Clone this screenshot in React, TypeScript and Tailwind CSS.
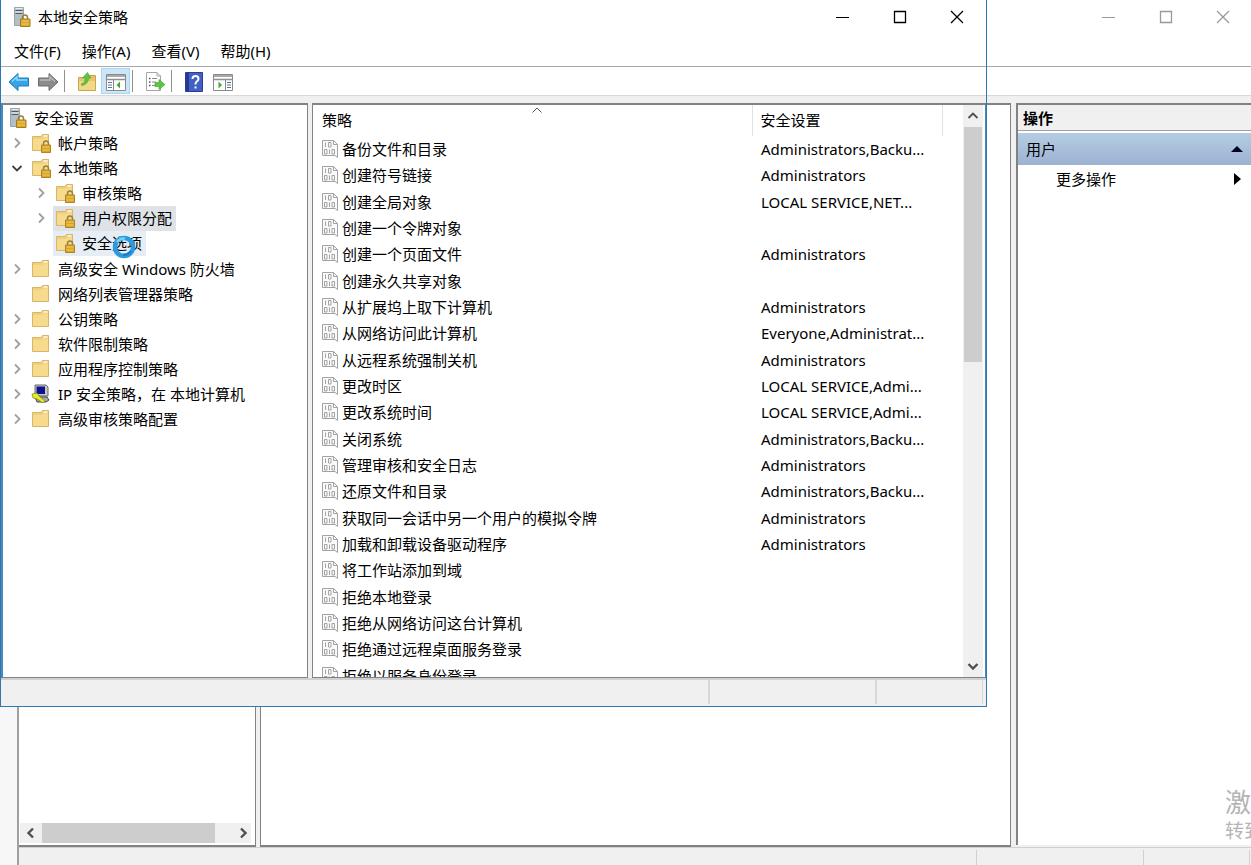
import type { ReactNode } from 'react';

interface TreeNode {
  label: string;
  level: number;
  icon: 'server' | 'locked' | 'folder' | 'ipsec';
  arrow?: 'closed' | 'open';
  state?: 'selected' | 'hover';
}

interface Policy {
  name: string;
  setting?: string;
}

const tree: TreeNode[] = [
  { label: '安全设置', level: 0, icon: 'server' },
  { label: '帐户策略', level: 1, icon: 'locked', arrow: 'closed' },
  { label: '本地策略', level: 1, icon: 'locked', arrow: 'open' },
  { label: '审核策略', level: 2, icon: 'locked', arrow: 'closed' },
  { label: '用户权限分配', level: 2, icon: 'locked', arrow: 'closed', state: 'selected' },
  { label: '安全选项', level: 2, icon: 'locked', state: 'hover' },
  { label: '高级安全 Windows 防火墙', level: 1, icon: 'folder', arrow: 'closed' },
  { label: '网络列表管理器策略', level: 1, icon: 'folder' },
  { label: '公钥策略', level: 1, icon: 'folder', arrow: 'closed' },
  { label: '软件限制策略', level: 1, icon: 'folder', arrow: 'closed' },
  { label: '应用程序控制策略', level: 1, icon: 'folder', arrow: 'closed' },
  { label: 'IP 安全策略，在 本地计算机', level: 1, icon: 'ipsec', arrow: 'closed' },
  { label: '高级审核策略配置', level: 1, icon: 'folder', arrow: 'closed' },
];

const policies: Policy[] = [
  { name: '备份文件和目录', setting: 'Administrators,Backu...' },
  { name: '创建符号链接', setting: 'Administrators' },
  { name: '创建全局对象', setting: 'LOCAL SERVICE,NET...' },
  { name: '创建一个令牌对象' },
  { name: '创建一个页面文件', setting: 'Administrators' },
  { name: '创建永久共享对象' },
  { name: '从扩展坞上取下计算机', setting: 'Administrators' },
  { name: '从网络访问此计算机', setting: 'Everyone,Administrat...' },
  { name: '从远程系统强制关机', setting: 'Administrators' },
  { name: '更改时区', setting: 'LOCAL SERVICE,Admi...' },
  { name: '更改系统时间', setting: 'LOCAL SERVICE,Admi...' },
  { name: '关闭系统', setting: 'Administrators,Backu...' },
  { name: '管理审核和安全日志', setting: 'Administrators' },
  { name: '还原文件和目录', setting: 'Administrators,Backu...' },
  { name: '获取同一会话中另一个用户的模拟令牌', setting: 'Administrators' },
  { name: '加载和卸载设备驱动程序', setting: 'Administrators' },
  { name: '将工作站添加到域' },
  { name: '拒绝本地登录' },
  { name: '拒绝从网络访问这台计算机' },
  { name: '拒绝通过远程桌面服务登录' },
  { name: '拒绝以服务身份登录' },
];

const menus = ['文件(F)', '操作(A)', '查看(V)', '帮助(H)'];

export default function App() {
  return (
    <div className="relative min-h-screen overflow-hidden bg-[#f7f7f7] pl-[17px] font-['Noto_Sans','Noto_Sans_CJK_SC',sans-serif] text-[15px] leading-5 text-black">
      <ConsoleWindow />
      <PolicyWindow />
    </div>
  );
}

// 后面的管理控制台窗口
function ConsoleWindow() {
  return (
    <div className="flex h-screen flex-col border-l-2 border-[#a0a0a0] bg-[#f0f0f0]">
      <div className="flex h-[66px] shrink-0 items-start justify-end bg-white text-[#999]">
        <CaptionButtons />
      </div>
      <div className="h-[30px] shrink-0 border-y border-t-[#a8a8a8] border-b-[#d8d8d8] bg-white" />
      <div className="flex min-h-0 flex-1 pt-[7px]">
        <div className="flex w-[237px] flex-col justify-end border-t-2 border-r border-b-2 border-[#828282] bg-white pr-1 pb-0.5 pl-px">
          <div className="flex h-5 items-center bg-[#f0f0f0]">
            <button aria-label="向左滚动" className="flex w-[22px] justify-center">
              <Chevron className="rotate-180 text-[#505050]" bold />
            </button>
            <div className="h-5 w-[173px] bg-[#cdcdcd]" />
            <button aria-label="向右滚动" className="ml-auto flex w-4 justify-center">
              <Chevron className="text-[#505050]" bold />
            </button>
          </div>
        </div>
        <div className="ml-1 flex-1 border border-t-2 border-b-2 border-[#828282] bg-white" />
        <div className="mb-0.5 ml-[5px] flex w-[235px] flex-col border-t-2 border-l-2 border-[#828282] bg-white">
          <div className="h-[26px] border-b border-[#a0a0a0] bg-[#f0f0f0] pt-[3px] pl-[5px] font-semibold">操作</div>
          <button className="mt-0.5 flex h-8 items-center justify-between bg-linear-to-b from-[#b4cde2] to-[#9db2d2] px-2">
            用户
            <svg className="h-1.5 w-3" viewBox="0 0 12 6">
              <path d="M6 0 12 6H0Z" fill="#000022" />
            </svg>
          </button>
          <button className="flex h-7 items-center justify-between pr-[10px] pl-[38px]">
            更多操作
            <svg className="h-3 w-[7px]" viewBox="0 0 7 12">
              <path d="M0 0 7 6 0 12Z" />
            </svg>
          </button>
          {/* 系统激活水印 */}
          <div className="mt-auto mb-0.5 ml-auto w-[26px] overflow-hidden whitespace-nowrap text-[#b4b4b4]">
            <p className="text-[26px] leading-[34px]">激活</p>
            <p className="text-[19px] leading-6">转到</p>
          </div>
        </div>
      </div>
      <div className="flex h-[18px] shrink-0 justify-end border-t border-[#d0d0d0] pt-0.5 pr-px">
        <div className="w-[167px] border-l border-[#d0d0d0]" />
        <div className="w-[107px] border-x border-[#d0d0d0]" />
      </div>
    </div>
  );
}

// 本地安全策略窗口
function PolicyWindow() {
  return (
    <div className="absolute top-0 right-[264px] bottom-[158px] left-0 flex flex-col border border-t-0 border-[#2a7ab0] bg-[#f0f0f0]">
      <div className="flex h-[34px] shrink-0 items-start justify-between bg-white pr-px pl-3">
        <div className="flex items-center gap-[7px] pt-[7px]">
          <ServerIcon />
          <h1>本地安全策略</h1>
        </div>
        <CaptionButtons />
      </div>
      <nav className="flex h-8 shrink-0 gap-[21px] bg-white pt-[7px] pl-[13px]">
        {menus.map((menu) => (
          <button key={menu} className="h-5">
            {menu}
          </button>
        ))}
      </nav>
      <Toolbar />
      <div className="flex min-h-0 flex-1 gap-1 pt-[7px]">
        <TreePane />
        <PolicyPane />
      </div>
      <div className="flex h-7 shrink-0 justify-end border-t-2 border-[#d0d0d0] pr-[3px] pb-0.5">
        <div className="w-[167px] border-l-2 border-[#d8d8d8]" />
        <div className="w-[108px] border-r border-l-2 border-[#d8d8d8]" />
      </div>
    </div>
  );
}

function CaptionButtons() {
  return (
    <div className="flex h-[34px]">
      <button aria-label="最小化" className="flex w-[57px] items-center justify-center">
        <svg className="size-[14px]" viewBox="0 0 14 14">
          <path d="M0 7.5H13" stroke="currentColor" />
        </svg>
      </button>
      <button aria-label="最大化" className="flex w-[57px] items-center justify-center">
        <svg className="size-[14px]" viewBox="0 0 14 14">
          <path d="M1.5 1.5H12.5V12.5H1.5Z" fill="none" stroke="currentColor" strokeWidth="1.3" />
        </svg>
      </button>
      <button aria-label="关闭" className="flex w-[57px] items-center justify-center">
        <svg className="size-[14px]" viewBox="0 0 14 14">
          <path d="M1 1 13 13M13 1 1 13" stroke="currentColor" strokeWidth="1.3" />
        </svg>
      </button>
    </div>
  );
}

function Toolbar() {
  return (
    <div className="flex h-[30px] shrink-0 items-center border-y border-t-[#a8a8a8] border-b-[#d8d8d8] bg-white pl-[3px]">
      <ToolButton label="后退">
        <svg className="h-5 w-[22px]" viewBox="0 0 22 20">
          <path d="M1 10 10 1.500V6H20.500V14H10V18.500Z" fill="#35a5e5" stroke="#1f7db8" />
          <path d="M4 9.500 9 5V8H19" fill="none" stroke="#8fd6fa" strokeWidth="1.500" />
        </svg>
      </ToolButton>
      <ToolButton label="前进">
        <svg className="h-5 w-[22px]" viewBox="0 0 22 20">
          <path d="M21 10 12 1.500V6H1.500V14H12V18.500Z" fill="#8c8c8c" stroke="#6c6c6c" />
          <path d="M3 8H13V5L18 9.500" fill="none" stroke="#b8b8b8" strokeWidth="1.500" />
        </svg>
      </ToolButton>
      <Separator />
      <ToolButton label="上移一级">
        <svg className="h-5 w-5" viewBox="0 0 20 20">
          <path d="M1.500 5.500H9L11 3.500H18.500V18.500H1.500Z" fill="#e6c56c" stroke="#c9a552" />
          <path d="M2 9H18V18H2Z" fill="#f1d788" />
          <path d="M4 12Q8 11.500 8.500 6H5.500L10.500 .5 14 6H11.500Q11.500 12 5 13.500Z" fill="#5cc83f" stroke="#479c34" strokeWidth=".6" />
        </svg>
      </ToolButton>
      <ToolButton label="显示/隐藏控制台树" active>
        <PanelIcon side="left" />
      </ToolButton>
      <Separator />
      <ToolButton label="导出列表">
        <svg className="h-5 w-5" viewBox="0 0 20 20">
          <path d="M1.500 .5H12L15.500 4V18.500H1.500Z" fill="#fff" stroke="#a5a5a5" />
          <path d="M12 .5V4H15.500" fill="none" stroke="#a5a5a5" />
          <path d="M4 6.500H5.500M4 10H5.500M4 13.500H5.500" stroke="#555" strokeWidth="1.300" />
          <path d="M7 6.500H12M7 10H11M7 13.500H11" stroke="#888" />
          <path d="M10 10.500H14V7.500L20 12.500 14 17.500V14.500H10Z" fill="#58c83f" stroke="#479c34" strokeWidth=".6" />
        </svg>
      </ToolButton>
      <Separator />
      <ToolButton label="帮助">
        <svg className="h-5 w-[18px]" viewBox="0 0 18 20">
          <path d="M.5 .5H17.500V19.500H.5Z" fill="#4160c4" stroke="#2b3c98" />
          <path d="M1 1H4V19H1Z" fill="#26398f" />
          <path d="M7.500 7Q7.500 4 10.500 4T13.500 7Q13.500 8.500 11.500 9.700 10.500 10.500 10.500 12.500M10.500 14.500V16.500" fill="none" stroke="#fff" strokeWidth="2" />
        </svg>
      </ToolButton>
      <ToolButton label="显示/隐藏操作窗格">
        <PanelIcon side="right" />
      </ToolButton>
    </div>
  );
}

function ToolButton({ label, active = false, children }: { label: string; active?: boolean; children: ReactNode }) {
  return (
    <button
      aria-label={label}
      className={`flex h-[26px] w-[29px] items-center justify-center pt-0.5 ${active ? 'border border-[#a9d6f5] bg-[#cce6f8]' : ''}`}
    >
      {children}
    </button>
  );
}

function Separator() {
  return <div className="mr-[7px] ml-0.5 h-[22px] w-px bg-[#909090]" />;
}

function PanelIcon({ side }: { side: 'left' | 'right' }) {
  return (
    <svg className="h-[18px] w-5 shrink-0" viewBox="0 0 20 18">
      <path d="M.5 1.500H19.500V17.500H.5Z" fill="#fff" stroke="#8a8a8a" />
      <path d="M1 2H19V4H1Z" fill="#a3aab0" />
      <path d="M1 6.500H19" stroke="#8f8f8f" strokeWidth="1.500" />
      {side === 'left' ? (
        <>
          <path d="M7.500 7V17" stroke="#888" />
          <path d="M2 9.500H6M2 12H6M2 14.500H6" stroke="#55779a" />
          <path d="M10.500 12 14 8.500V15.500Z" fill="#45a82f" />
        </>
      ) : (
        <>
          <path d="M12.500 7V17" stroke="#888" />
          <path d="M14 9.500H18M14 12H18M14 14.500H18" stroke="#55779a" />
          <path d="M9 12 5.500 8.500V15.500Z" fill="#45a82f" />
        </>
      )}
    </svg>
  );
}

// 左侧树
function TreePane() {
  return (
    <div className="w-[307px] shrink-0 overflow-hidden border border-t-2 border-l-2 border-[#828282] border-l-[#4b86bd] bg-white">
      <ul className="flex h-[327px] flex-col">
        {tree.map((node) => (
          <TreeRow key={node.label} node={node} />
        ))}
      </ul>
    </div>
  );
}

function TreeRow({ node }: { node: TreeNode }) {
  const indent = node.level === 2 ? 'pl-7' : 'pl-1';
  const background =
    node.state === 'selected' ? 'bg-[#dfe2e6]' : node.state === 'hover' ? 'bg-[#e6edf4]' : '';

  return (
    <li className={`flex flex-1 items-stretch gap-0.5 ${indent}`}>
      {node.level > 0 && (
        <span className="flex w-5 items-center justify-center">
          {node.arrow === 'closed' && <Chevron className="text-[#a0a0a0]" />}
          {node.arrow === 'open' && <Chevron className="rotate-90 text-[#404040]" />}
        </span>
      )}
      <button className={`relative flex items-center gap-[7px] pr-1 pl-0.5 whitespace-nowrap ${background}`}>
        <TreeIcon icon={node.icon} />
        {node.label}
        {node.state === 'hover' && <BusyCursor />}
      </button>
    </li>
  );
}

function TreeIcon({ icon }: { icon: TreeNode['icon'] }) {
  if (icon === 'server') return <ServerIcon />;
  if (icon === 'ipsec') {
    return (
      <svg className="size-5" viewBox="0 0 20 20">
        <path d="M4 1H15L17 3V12H4Z" fill="#c8c8c8" stroke="#666" />
        <path d="M5.500 2.500H14V10H5.500Z" fill="#101090" />
        <path d="M4 13H16L18 16 15 18H6Z" fill="#aaa" stroke="#444" />
        <path d="M1 10 6 9 8 12 14 17 12 19 6 15 2 14Z" fill="#e2ee20" stroke="#7a8010" strokeWidth=".7" />
      </svg>
    );
  }
  return (
    <svg className="size-5" viewBox="0 0 20 20">
      <path d="M1.500 3.500H10L11.500 1.500H17.500V17.500H1.500Z" fill="#f0cf7e" stroke="#d9b566" />
      <path d="M2 6H11L12.500 4.500H17V17H2Z" fill="#f6da8e" />
      <path d="M12.500 3H16.500" stroke="#fff9e0" strokeWidth="1.500" />
      {icon === 'locked' && <Padlock />}
    </svg>
  );
}

function Padlock() {
  return (
    <>
      <path d="M12.500 13V10.500Q12.500 8 15 8T17.500 10.500V13" fill="none" stroke="#9a8040" strokeWidth="1.500" />
      <path d="M10.500 12H19.500V19.500H10.500Z" fill="#d8a62a" stroke="#b08420" />
      <path d="M11.500 14H18.500M11.500 17H18.500" stroke="#f0cc62" />
    </>
  );
}

function ServerIcon() {
  return (
    <svg className="h-5 w-[18px] shrink-0" viewBox="0 0 18 20">
      <path d="M1.500 .5H10.500V18.500H1.500Z" fill="#b4bec6" stroke="#98a3ac" />
      <path d="M2.500 3.500H9.500M2.500 6.500H9.500" stroke="#4f5a63" />
      <path d="M2.500 1.500H9.500M2.500 5H9.500" stroke="#e8edf0" />
      <path d="M9.500 13V10.500Q9.500 8 12 8T14.500 10.500V13" fill="none" stroke="#9a8040" strokeWidth="1.500" />
      <path d="M7.500 12H17V19.500H7.500Z" fill="#d8a62a" stroke="#a87c1c" />
      <path d="M8.500 14H16M8.500 17H16" stroke="#f0cc62" />
    </svg>
  );
}

function Chevron({ className, bold = false }: { className: string; bold?: boolean }) {
  return (
    <svg className={`size-3 ${className}`} viewBox="0 0 12 12">
      <path d="M4 1.500 8.500 6 4 10.500" fill="none" stroke="currentColor" strokeWidth={bold ? 2.4 : 1.8} />
    </svg>
  );
}

// 忙碌光标
function BusyCursor() {
  return (
    <svg className="absolute top-1 left-[59px] size-6" viewBox="0 0 24 24">
      <circle cx="12" cy="12" r="9" fill="none" stroke="#2b9be0" strokeWidth="4.500" />
      <path d="M5 7Q8 3 13 3.500" fill="none" stroke="#72d3f5" strokeWidth="2.500" />
      <path d="M19 16Q16 20 11 20" fill="none" stroke="#1c7ccc" strokeWidth="2.500" />
    </svg>
  );
}

// 右侧策略列表
function PolicyPane() {
  return (
    <div className="flex min-w-0 flex-1 overflow-hidden border border-t-2 border-[#828282] border-r-[#4b86bd] bg-white pr-0.5">
      <div className="min-w-0 flex-1">
        <table className="h-[584px] w-full table-fixed">
          <thead>
            <tr className="h-[31px] text-left">
              <th className="relative pb-0.5 pl-[9px] font-normal">
                策略
                <svg className="absolute top-0.5 left-1/2 h-[6px] w-[10px]" viewBox="0 0 10 6">
                  <path d="M.5 5.500 5 1 9.500 5.500" fill="none" stroke="#555" />
                </svg>
              </th>
              <th className="w-[190px] border-x border-[#e2e2e2] pb-0.5 pl-2 font-normal">安全设置</th>
              <td className="w-[21px]" />
            </tr>
          </thead>
          <tbody>
            {policies.map((policy) => (
              <tr key={policy.name} className="whitespace-nowrap">
                <td className="pl-[9px]">
                  <div className="flex items-center gap-1">
                    <PolicyIcon />
                    {policy.name}
                  </div>
                </td>
                <td className="pl-[9px]">{policy.setting}</td>
                <td />
              </tr>
            ))}
          </tbody>
        </table>
      </div>
      <div className="flex w-5 flex-col items-center bg-[#f0f0f0]">
        <button aria-label="向上滚动" className="flex h-[22px] w-5 items-center justify-center">
          <Chevron className="-rotate-90 text-[#505050]" />
        </button>
        <div className="h-[235px] w-[18px] bg-[#cdcdcd]" />
        <button aria-label="向下滚动" className="mt-auto flex h-[22px] w-5 items-center justify-center">
          <Chevron className="rotate-90 text-[#505050]" bold />
        </button>
      </div>
    </div>
  );
}

function PolicyIcon() {
  return (
    <svg className="h-[18px] w-4 shrink-0" viewBox="0 0 16 18" fill="none" stroke="#a2a2a2">
      <path d="M.5 .5H11.500L15.500 4.500V17.500L13 15.500H.5Z" fill="#fafafa" />
      <path d="M11.500 .5V4.500H15.500" />
      <path d="M3.500 2.500V7M6.500 2.500H9V7H6.500ZM2.500 9.500H5V14H2.500ZM7.500 9.500V14M10 9.500H12.500V14H10Z" />
    </svg>
  );
}
